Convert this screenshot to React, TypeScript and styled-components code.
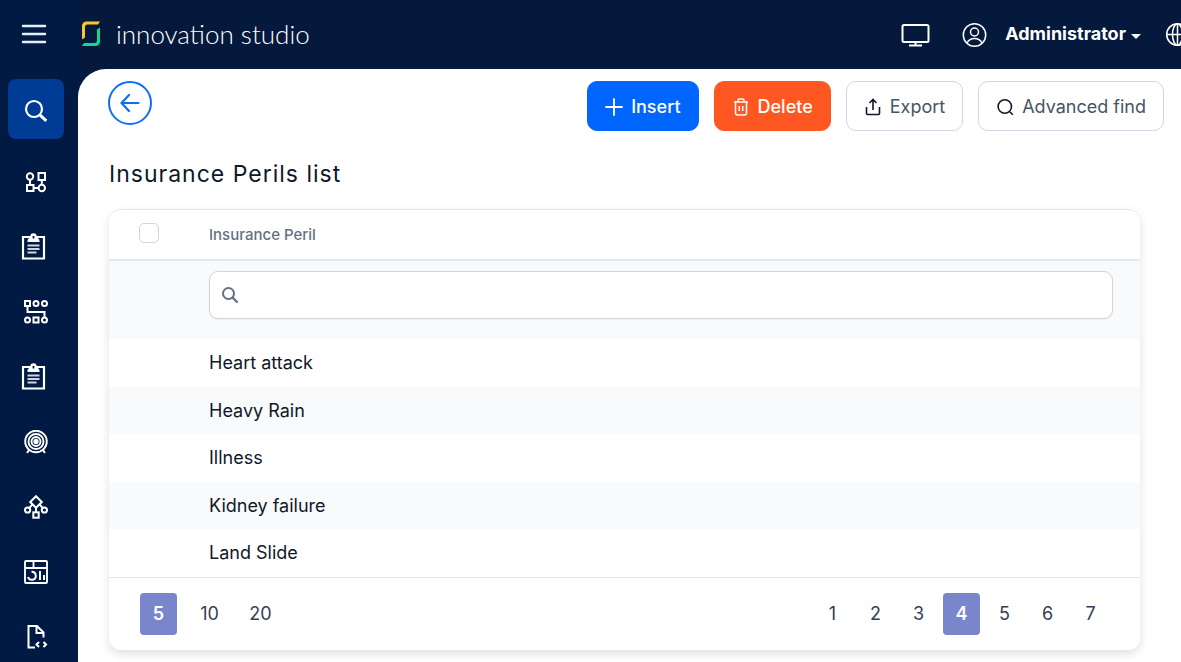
import React from 'react';
import styled, { createGlobalStyle, css } from 'styled-components';

const GlobalStyle = createGlobalStyle`
  *, *::before, *::after { box-sizing: border-box; }
  body {
    margin: 0;
    background: #001a43;
    color: #101828;
    font-family: Inter, "Liberation Sans", sans-serif;
    font-size: 18px;
    line-height: 24px;
  }
  button, input { font: inherit; }
  svg { display: block; flex: none; }
`;

const Shell = styled.div`
  display: grid;
  grid-template-columns: 78px minmax(0, 1fr);
  min-height: 100vh;
`;

const Sidebar = styled.aside`
  height: 100vh;
  overflow: hidden;
  background: #001a43;
`;

const MenuButton = styled.button`
  display: flex;
  align-items: center;
  justify-content: center;
  width: 68px;
  height: 69px;
  padding: 0 0 2px;
  border: 0;
  background: none;
  color: #e9edf5;
  cursor: pointer;
`;

const SideNav = styled.nav`
  display: flex;
  flex-direction: column;
  gap: 5px;
  padding: 10px 14px 0 8px;
`;

const sideItem = css`
  display: flex;
  flex: none;
  align-items: center;
  justify-content: center;
  width: 56px;
  height: 60px;
  border-radius: 8px;
  color: #fff;
`;

const SearchButton = styled.button`
  ${sideItem}
  margin-bottom: 8px;
  padding: 3px 0 0;
  border: 0;
  background: #003c96;
  cursor: pointer;
`;

const SideLink = styled.a`
  ${sideItem}
`;

const Page = styled.div`
  display: flex;
  flex-direction: column;
  min-width: 0;
`;

const TopBar = styled.header`
  display: flex;
  align-items: center;
  justify-content: space-between;
  height: 69px;
  overflow: hidden;
  background: #04193b;
`;

const Brand = styled.a`
  display: flex;
  align-items: center;
  gap: 15px;
  padding: 0 0 1px 3px;
  color: #fff;
  font-family: Lato, Inter, sans-serif;
  font-size: 26px;
  font-weight: 300;
  line-height: 30px;
  text-decoration: none;
  white-space: nowrap;
`;

const TopActions = styled.div`
  display: flex;
  align-items: center;
  margin-right: -9px;
`;

const IconButton = styled.button`
  display: flex;
  padding: 0;
  border: 0;
  background: none;
  color: #fff;
  cursor: pointer;
`;

const UserButton = styled(IconButton)`
  align-items: center;
  gap: 18px;
  margin: 0 24px 0 32px;
`;

const UserName = styled.span`
  display: flex;
  align-items: center;
  gap: 5px;
  padding-bottom: 2px;
  font-weight: 700;
`;

const Caret = styled.span`
  margin-top: 5px;
  border: 5px solid transparent;
  border-top-color: #fff;
  border-bottom: 0;
`;

const Main = styled.main`
  flex: 1;
  padding: 12px 17px 11px 30px;
  border-top-left-radius: 28px;
  background: #fff;
`;

const Toolbar = styled.div`
  display: flex;
  align-items: flex-start;
  justify-content: space-between;
`;

const BackLink = styled.a`
  display: flex;
  align-items: center;
  justify-content: center;
  width: 44px;
  height: 44px;
  border: 2px solid #0f6dfd;
  border-radius: 50%;
  color: #0f6dfd;
`;

const ButtonGroup = styled.div`
  display: flex;
  gap: 15px;
`;

const tones = {
  primary: css`background: #0066ff; border-color: #0066ff; color: #fff;`,
  danger: css`background: #ff5722; border-color: #ff5722; color: #fff;`,
  plain: css`background: #fff; border-color: #d0d5dd; color: #475467; font-weight: 400;`,
};

const ActionButton = styled.button<{ $tone: keyof typeof tones }>`
  display: flex;
  align-items: center;
  gap: 8px;
  height: 50px;
  padding: 2px 17px 0;
  border: 1px solid;
  border-radius: 10px;
  font-weight: 500;
  white-space: nowrap;
  cursor: pointer;
  ${({ $tone }) => tones[$tone]}
`;

const Title = styled.h1`
  margin: 27px 0 19px 1px;
  font-size: 23px;
  font-weight: 400;
  line-height: 32px;
  letter-spacing: 1px;
`;

const Card = styled.section`
  margin: 0 24px 0 1px;
  overflow: hidden;
  border-top: 1px solid #e4e7ec;
  border-radius: 12px;
  background: #fff;
  box-shadow: 0 4px 10px rgba(16, 24, 40, 0.13);
`;

const Table = styled.table`
  width: 100%;
  border-collapse: separate;
  border-spacing: 0;
  table-layout: fixed;
`;

const HeadCell = styled.th<{ $select?: boolean }>`
  width: ${({ $select }) => ($select ? '100px' : 'auto')};
  height: 51px;
  padding: ${({ $select }) => ($select ? '0 0 4px 30px' : '0')};
  border-bottom: 2px solid #e4e7ec;
  color: #667085;
  font-size: 15px;
  font-weight: 500;
  line-height: 20px;
  text-align: left;
`;

const Checkbox = styled.input`
  display: block;
  width: 20px;
  height: 20px;
  margin: 0;
  border: 1px solid #d0d5dd;
  border-radius: 5px;
  background: #fff;
  appearance: none;
`;

const FilterCell = styled.td`
  height: 78px;
  padding: 10px 27px 0 0;
  background: #f9fafb;
  vertical-align: top;
`;

const FilterBox = styled.label`
  display: flex;
  align-items: center;
  gap: 10px;
  height: 48px;
  padding: 0 11px;
  border: 1px solid #d0d5dd;
  border-radius: 9px;
  background: #fff;
  color: #667085;
  box-shadow: 0 1px 2px rgba(16, 24, 40, 0.05);
`;

const FilterInput = styled.input`
  flex: 1;
  min-width: 0;
  padding: 0;
  border: 0;
  outline: 0;
  background: none;
  color: #101828;
`;

const Row = styled.tr<{ $striped: boolean }>`
  height: ${({ $striped }) => ($striped ? '47px' : '48px')};
  background: ${({ $striped }) => ($striped ? '#f9fafb' : '#fff')};
`;

const Cell = styled.td`
  padding: 0;
`;

const Footer = styled.footer`
  display: flex;
  justify-content: space-between;
  padding: 15px 31px;
  border-top: 1px solid #e4e7ec;
`;

const PageList = styled.div<{ $gap: number }>`
  display: flex;
  gap: ${({ $gap }) => $gap}px;
`;

const PageButton = styled.button<{ $active: boolean }>`
  min-width: 37px;
  height: 42px;
  padding: 0 7px;
  border: 0;
  border-radius: 4px;
  background: ${({ $active }) => ($active ? '#7986cb' : 'transparent')};
  color: ${({ $active }) => ($active ? '#fff' : '#344054')};
  font-weight: ${({ $active }) => ($active ? 600 : 400)};
  cursor: pointer;
`;

type IconProps = { w?: number; h?: number; box?: string; stroke?: number; children: React.ReactNode };

const Icon = ({ w = 24, h = w, box, stroke = 2, children }: IconProps) => (
  <svg
    width={w}
    height={h}
    viewBox={box ?? `0 0 ${w} ${h}`}
    fill="none"
    stroke="currentColor"
    strokeWidth={stroke}
    aria-hidden="true"
  >
    {children}
  </svg>
);

const NodesIcon = () => (
  <Icon>
    <circle cx="6" cy="6.5" r="3.2" />
    <rect x="14.5" y="3" width="6.5" height="7" />
    <rect x="3" y="15" width="6.5" height="6" />
    <circle cx="17.8" cy="18" r="3.2" />
    <path d="M6 10v5M17.8 10v5M9.5 18h5" />
  </Icon>
);

const ClipboardIcon = () => (
  <Icon w={30} h={28}>
    <path d="M2 4h21v21.500H2z" strokeWidth="2.200" />
    <path d="M12.500.300a3.200 3.200 0 0 1 3.200 3.200c0 1.500 2.800 2 2.800 4V9h-12V7.500c0-2 2.800-2.500 2.800-4A3.200 3.200 0 0 1 12.500.300z" fill="currentColor" stroke="none" />
    <path d="M12.500 3v2.500" stroke="#001a43" strokeWidth="1.800" />
    <path d="M6.500 12.500h12M6.500 16h12M6.500 19.500h9" strokeWidth="2.200" stroke="#cdd3e0" />
  </Icon>
);

const FlowIcon = () => (
  <Icon>
    <rect x="1" y="1" width="5" height="5" />
    <circle cx="12" cy="3.500" r="2.500" />
    <circle cx="20.500" cy="3.500" r="2.500" />
    <circle cx="3.500" cy="20" r="2.500" />
    <rect x="9.500" y="17.500" width="5" height="5" />
    <circle cx="20.500" cy="20" r="2.500" />
    <path d="M3.500 6v6h17v5.500" />
  </Icon>
);

const TargetIcon = () => (
  <Icon stroke={1.9}>
    <circle cx="12" cy="11.500" r="10.800" />
    <circle cx="12" cy="11.500" r="7.500" />
    <circle cx="12" cy="11.500" r="4.500" />
    <circle cx="12" cy="11.500" r="1.700" fill="currentColor" />
    <path d="M5 20l-2 3M19 20l2 3" strokeWidth="2" />
  </Icon>
);

const DecisionIcon = () => (
  <Icon>
    <path d="M12 1.200l5.800 5.800L12 12.800 6.200 7z" />
    <circle cx="3.600" cy="15" r="2.600" />
    <circle cx="20.400" cy="15" r="2.600" />
    <rect x="9.300" y="17.300" width="5.400" height="5.400" />
    <path d="M12 12v5.500M8.500 9.300L5.200 13M15.500 9.300l3.300 3.700" />
  </Icon>
);

const DashboardIcon = () => (
  <Icon stroke={1.9}>
    <rect x="1" y="1" width="22" height="22" rx="1" />
    <path d="M1 8h22M9.500 1v7" />
    <path d="M7.500 11.800A4 4 0 1 1 4 17" strokeWidth="2" />
    <path d="M16 11v9M20 15v5" strokeWidth="2" />
  </Icon>
);

const CodeFileIcon = () => (
  <Icon>
    <path d="M11 22.500H4.500V1H13l6.500 6.500v5M12.500 1.500v6.500h6.500" />
    <path d="M15 17l-2.500 2.500L15 22M19.500 17l2.500 2.500-2.500 2.500" />
  </Icon>
);

const sideLinks = [
  { label: 'Workflows', icon: <NodesIcon /> },
  { label: 'Forms', icon: <ClipboardIcon /> },
  { label: 'Processes', icon: <FlowIcon /> },
  { label: 'Records', icon: <ClipboardIcon /> },
  { label: 'Goals', icon: <TargetIcon /> },
  { label: 'Decisions', icon: <DecisionIcon /> },
  { label: 'Dashboards', icon: <DashboardIcon /> },
  { label: 'Code files', icon: <CodeFileIcon /> },
];

const perils = ['Heart attack', 'Heavy Rain', 'Illness', 'Kidney failure', 'Land Slide'];
const pageSizes = [5, 10, 20];
const pages = [1, 2, 3, 4, 5, 6, 7];

export default function App() {
  const [pageSize, setPageSize] = React.useState(5);
  const [page, setPage] = React.useState(4);

  return (
    <>
      <GlobalStyle />
      <Shell>
        <Sidebar>
          <MenuButton aria-label="Menu">
            <Icon w={26} h={20} stroke={2.4}>
              <path d="M2 2h22M2 10h22M2 18h22" strokeLinecap="round" />
            </Icon>
          </MenuButton>
          <SideNav aria-label="Main">
            <SearchButton aria-label="Search">
              <Icon>
                <circle cx="10" cy="10" r="8" strokeWidth="2.200" />
                <path d="M15.800 15.800l6.500 6" strokeWidth="3" />
              </Icon>
            </SearchButton>
            {sideLinks.map(({ label, icon }) => (
              <SideLink key={label} href="#" aria-label={label}>
                {icon}
              </SideLink>
            ))}
          </SideNav>
        </Sidebar>
        <Page>
          <TopBar>
            <Brand href="#">
              <svg width="20" height="26" viewBox="0 0 20 26" fill="none" aria-hidden="true">
                <path d="M1 18.500V5a4.500 4.500 0 0 1 4.500-4.500H19l-2 3H6.500A2.500 2.500 0 0 0 4 6v10.500z" fill="#fdc62f" />
                <path d="M19 6.500v14a4.500 4.500 0 0 1-4.500 4.500H1l2-3h10.500a2.500 2.500 0 0 0 2.500-2.500V8.500z" fill="#10d98f" />
              </svg>
              innovation studio
            </Brand>
            <TopActions>
              <IconButton aria-label="Display">
                <Icon w={29} h={24} stroke={2}>
                  <rect x="1.500" y="2" width="26" height="17" rx="1.500" />
                  <path d="M14.500 19v3M8 22.500h13" />
                </Icon>
              </IconButton>
              <UserButton>
                <Icon w={25} stroke={1.5}>
                  <circle cx="12.500" cy="13" r="11.200" />
                  <circle cx="12.500" cy="10" r="4" />
                  <path d="M5 21c1.500-3 4-4.500 7.500-4.500S18.500 18 20 21" />
                </Icon>
                <UserName>
                  Administrator
                  <Caret />
                </UserName>
              </UserButton>
              <IconButton aria-label="Language">
                <Icon w={25} stroke={1.5}>
                  <circle cx="12.500" cy="12.500" r="10.800" />
                  <ellipse cx="12.500" cy="12.500" rx="5" ry="10.800" />
                  <path d="M12.500 1.700v21.600M1.700 12.500h21.600" />
                </Icon>
              </IconButton>
            </TopActions>
          </TopBar>
          <Main>
            <Toolbar>
              <BackLink href="#" aria-label="Back">
                <Icon w={20} stroke={2.2}>
                  <path d="M18.500 10H2M9 2L1.500 10 9 18" strokeLinecap="round" strokeLinejoin="round" />
                </Icon>
              </BackLink>
              <ButtonGroup>
                <ActionButton $tone="primary">
                  <Icon w={18} stroke={1.8}>
                    <path d="M9 1v16M1 9h16" strokeLinecap="round" />
                  </Icon>
                  Insert
                </ActionButton>
                <ActionButton $tone="danger">
                  <Icon w={18} stroke={1.5}>
                    <path d="M2 4h14M3.500 4v11a2 2 0 0 0 2 2h7a2 2 0 0 0 2-2V4M6 4V2.500A1.500 1.500 0 0 1 7.500 1h3A1.500 1.500 0 0 1 12 2.500V4M7.300 8v5M10.700 8v5" />
                  </Icon>
                  Delete
                </ActionButton>
                <ActionButton $tone="plain">
                  <Icon w={18} stroke={1.6}>
                    <path d="M2.500 9v6.500a1 1 0 0 0 1 1h11a1 1 0 0 0 1-1V9M9 12V1.500M5.500 5L9 1.500 12.500 5" stroke="#101828" />
                  </Icon>
                  Export
                </ActionButton>
                <ActionButton $tone="plain">
                  <Icon w={18} stroke={1.6}>
                    <path d="M15.500 8.500a6.700 6.700 0 1 1-13.400 0 6.700 6.700 0 0 1 13.400 0zM13.500 13.500l3.300 3.300" stroke="#101828" />
                  </Icon>
                  Advanced find
                </ActionButton>
              </ButtonGroup>
            </Toolbar>
            <Title>Insurance Perils list</Title>
            <Card>
              <Table>
                <thead>
                  <tr>
                    <HeadCell $select>
                      <Checkbox type="checkbox" aria-label="Select all" />
                    </HeadCell>
                    <HeadCell>Insurance Peril</HeadCell>
                  </tr>
                </thead>
                <tbody>
                  <tr>
                    <FilterCell />
                    <FilterCell>
                      <FilterBox>
                        <Icon w={18}>
                          <circle cx="7.500" cy="7.500" r="5.500" />
                          <path d="M11.500 11.500l5 5" strokeWidth="2.400" />
                        </Icon>
                        <FilterInput type="text" aria-label="Filter by insurance peril" />
                      </FilterBox>
                    </FilterCell>
                  </tr>
                  {perils.map((name, i) => (
                    <Row key={name} $striped={i % 2 === 1}>
                      <Cell />
                      <Cell>{name}</Cell>
                    </Row>
                  ))}
                </tbody>
              </Table>
              <Footer>
                <PageList $gap={14}>
                  {pageSizes.map((n) => (
                    <PageButton key={n} $active={n === pageSize} onClick={() => setPageSize(n)}>
                      {n}
                    </PageButton>
                  ))}
                </PageList>
                <PageList $gap={6}>
                  {pages.map((n) => (
                    <PageButton key={n} $active={n === page} onClick={() => setPage(n)}>
                      {n}
                    </PageButton>
                  ))}
                </PageList>
              </Footer>
            </Card>
          </Main>
        </Page>
      </Shell>
    </>
  );
}
